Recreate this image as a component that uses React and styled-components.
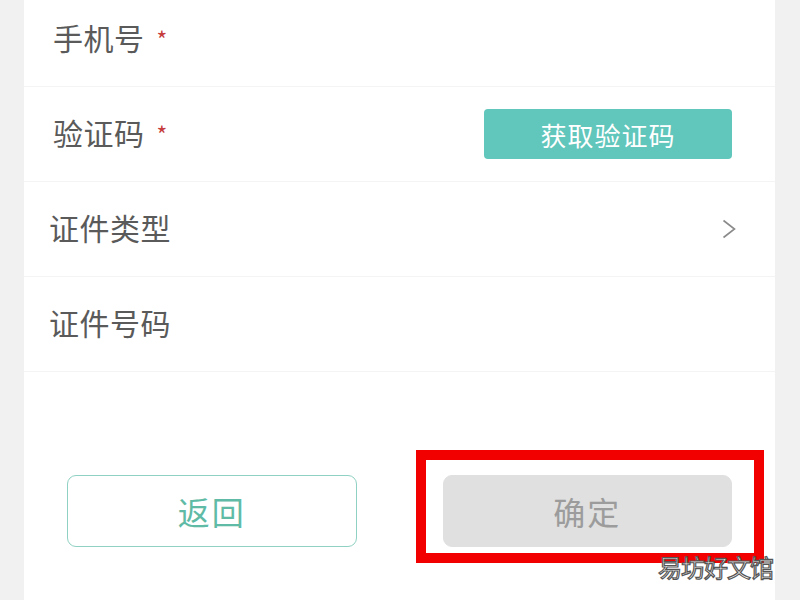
import React from "react";
import styled, { createGlobalStyle } from "styled-components";

const GlobalStyle = createGlobalStyle`
    body {
        margin: 0;
        background: #f1f1f1;
        font-family: "Noto Sans CJK SC", "Noto Sans", sans-serif;
    }
`;

const Page = styled.div`
    position: relative;
    width: 800px;
    height: 600px;
    overflow: hidden;
    background: #f1f1f1;
`;

const Card = styled.div`
    width: 751px;
    height: 620px;
    margin: -8px 0 0 24px;
    background: #fff;
`;

const Row = styled.div`
    display: flex;
    align-items: center;
    height: 94px;
    padding-left: ${(p) => p.$indent}px;
    border-bottom: 1px solid #f4f4f4;
`;

const Label = styled.span`
    margin-bottom: 5px;
    font-size: 30px;
    letter-spacing: 0.5px;
    color: #5a5a5a;
`;

const Star = styled.span`
    margin-left: 12px;
    font-size: 23px;
    color: #c63b3b;
`;

const CodeButton = styled.button`
    margin: 0 43px 0 auto;
    width: 248px;
    height: 50px;
    border: none;
    border-radius: 4px;
    background: #61c6bb;
    color: #fff;
    font-family: inherit;
    font-size: 26px;
    letter-spacing: 1px;
`;

const Chevron = styled.svg`
    margin: 0 39px 0 auto;
`;

const Footer = styled.div`
    display: grid;
    grid-template-columns: 1fr 1fr;
    gap: 86px;
    padding: 103px 43px 0;
`;

const Action = styled.button`
    position: relative;
    height: 72px;
    border-radius: 9px;
    font-family: inherit;
    font-size: 32px;
    letter-spacing: 2px;
    border: 1px solid ${(p) => (p.$primary ? "#e0e0e0" : "#8fd1c3")};
    background: ${(p) => (p.$primary ? "#e0e0e0" : "#fff")};
    color: ${(p) => (p.$primary ? "#9c9c9c" : "#5fbba5")};
`;

const Highlight = styled.div`
    position: absolute;
    left: -28px;
    right: -33px;
    top: -26px;
    bottom: -17px;
    border: 10px solid #f20000;
    pointer-events: none;
`;

const Watermark = styled.div`
    position: absolute;
    right: 27px;
    top: 549px;
    font-size: 24px;
    color: #fff;
    -webkit-text-stroke: 1.2px #555;
    letter-spacing: -1px;
`;

export default function App() {
    return (
        <Page>
            <GlobalStyle />
            <Card>
                <Row $indent={29}>
                    <Label>手机号</Label>
                    <Star>*</Star>
                </Row>
                <Row $indent={29}>
                    <Label>验证码</Label>
                    <Star>*</Star>
                    <CodeButton>获取验证码</CodeButton>
                </Row>
                <Row $indent={25}>
                    <Label>证件类型</Label>
                    <Chevron width="14" height="20" viewBox="0 0 14 20" fill="none">
                        <path d="M1.5 1.5 L12.5 10 L1.5 18.5" stroke="#8a8a8a" strokeWidth="1.6" />
                    </Chevron>
                </Row>
                <Row $indent={25}>
                    <Label>证件号码</Label>
                </Row>
                <Footer>
                    <Action>返回</Action>
                    <Action $primary>
                        确定
                        <Highlight />
                    </Action>
                </Footer>
            </Card>
            <Watermark>易坊好文馆</Watermark>
        </Page>
    );
}
